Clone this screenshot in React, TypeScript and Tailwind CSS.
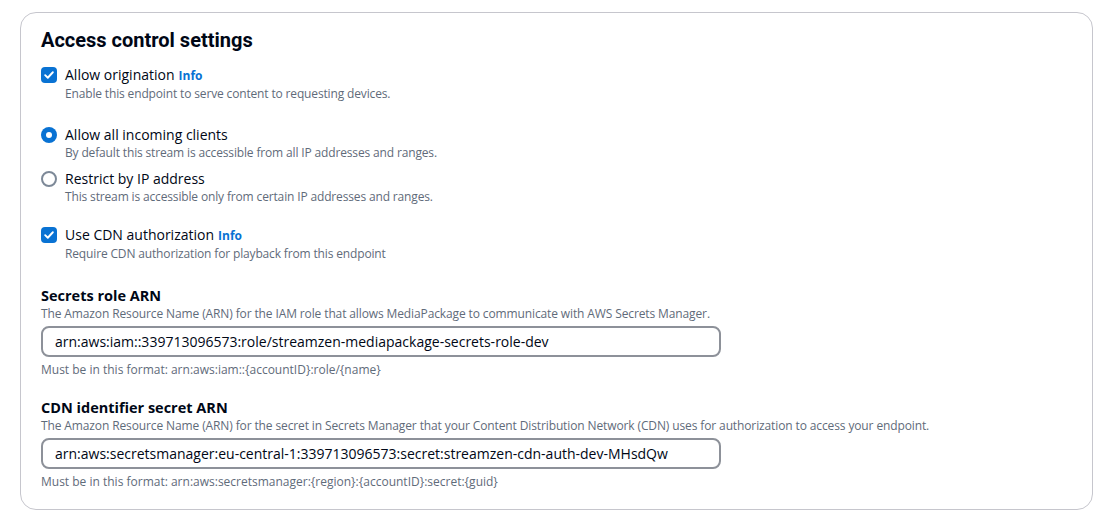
import React, { useState } from "react";

function Checkbox({ checked, onChange }: { checked: boolean; onChange: () => void }) {
  return (
    <button
      type="button"
      onClick={onChange}
      className={`flex h-4 w-4 shrink-0 items-center justify-center rounded-[4px] ${
        checked ? "bg-[#0972d3]" : "border-2 border-[#7d8998] bg-white"
      }`}
    >
      {checked && (
        <svg viewBox="0 0 14 14" className="h-3 w-3" fill="none">
          <path d="M2.5 7.2 5.6 10.2 11.5 3.8" stroke="white" strokeWidth="2.2" strokeLinecap="round" strokeLinejoin="round" />
        </svg>
      )}
    </button>
  );
}

function Radio({ checked, onChange }: { checked: boolean; onChange: () => void }) {
  return (
    <button
      type="button"
      onClick={onChange}
      className={`flex h-4 w-4 shrink-0 items-center justify-center rounded-full ${
        checked ? "bg-[#0972d3]" : "border-2 border-[#7d8998] bg-white"
      }`}
    >
      {checked && <span className="h-[6px] w-[6px] rounded-full bg-white" />}
    </button>
  );
}

function Info() {
  return <a className="ml-1 cursor-pointer text-[12px] font-bold text-[#0972d3]">Info</a>;
}

function Option({
  control,
  label,
  desc,
  info,
}: {
  control: React.ReactNode;
  label: string;
  desc: string;
  info?: boolean;
}) {
  return (
    <div className="flex">
      <div className="flex h-5 w-6 shrink-0 items-center">{control}</div>
      <div>
        <div className="text-[14px] leading-5 text-[#000716]">
          {label}
          {info && <Info />}
        </div>
        <div className="text-[12px] leading-4 tracking-[-0.15px] text-[#5f6b7a]">{desc}</div>
      </div>
    </div>
  );
}

function ArnField({ label, desc, value, hint }: { label: string; desc: string; value: string; hint: string }) {
  const [v, setV] = useState(value);
  return (
    <div>
      <div className="text-[14.5px] font-bold leading-5 text-[#000716]">{label}</div>
      <div className="text-[12px] leading-4 tracking-[-0.12px] text-[#5f6b7a]">{desc}</div>
      <input
        value={v}
        onChange={(e) => setV(e.target.value)}
        className="mt-[4px] block h-[31px] w-[680px] rounded-[8px] border-2 border-[#8d9199] bg-white pl-3 text-[14px] text-[#000716] outline-none"
      />
      <div className="mt-[5px] text-[12px] leading-4 text-[#5f6b7a]">{hint}</div>
    </div>
  );
}

export default function App() {
  const [origination, setOrigination] = useState(true);
  const [access, setAccess] = useState<"all" | "ip">("all");
  const [cdnAuth, setCdnAuth] = useState(true);

  return (
    <div className="min-h-[524px] bg-white pl-5 pt-3" style={{ fontFamily: '"Open Sans", "Noto Sans", Arial, sans-serif' }}>
      <div className="h-[498px] w-[1073px] rounded-[16px] border border-[#c6c6cd] bg-white pl-[20px] pt-[15px]">
        <h2 className="font-['Roboto',sans-serif] text-[20px] font-bold leading-6 text-[#000716]">Access control settings</h2>

        <div className="mt-[13px]">
          <Option
            control={<Checkbox checked={origination} onChange={() => setOrigination(!origination)} />}
            label="Allow origination"
            info
            desc="Enable this endpoint to serve content to requesting devices."
          />
        </div>

        <div className="mt-[23px] flex flex-col gap-2">
          <Option
            control={<Radio checked={access === "all"} onChange={() => setAccess("all")} />}
            label="Allow all incoming clients"
            desc="By default this stream is accessible from all IP addresses and ranges."
          />
          <Option
            control={<Radio checked={access === "ip"} onChange={() => setAccess("ip")} />}
            label="Restrict by IP address"
            desc="This stream is accessible only from certain IP addresses and ranges."
          />
        </div>

        <div className="mt-5">
          <Option
            control={<Checkbox checked={cdnAuth} onChange={() => setCdnAuth(!cdnAuth)} />}
            label="Use CDN authorization"
            info
            desc="Require CDN authorization for playback from this endpoint"
          />
        </div>

        <div className="mt-6 flex flex-col gap-5">
          <ArnField
            label="Secrets role ARN"
            desc="The Amazon Resource Name (ARN) for the IAM role that allows MediaPackage to communicate with AWS Secrets Manager."
            value="arn:aws:iam::339713096573:role/streamzen-mediapackage-secrets-role-dev"
            hint="Must be in this format: arn:aws:iam::{accountID}:role/{name}"
          />
          <ArnField
            label="CDN identifier secret ARN"
            desc="The Amazon Resource Name (ARN) for the secret in Secrets Manager that your Content Distribution Network (CDN) uses for authorization to access your endpoint."
            value="arn:aws:secretsmanager:eu-central-1:339713096573:secret:streamzen-cdn-auth-dev-MHsdQw"
            hint="Must be in this format: arn:aws:secretsmanager:{region}:{accountID}:secret:{guid}"
          />
        </div>
      </div>
    </div>
  );
}
